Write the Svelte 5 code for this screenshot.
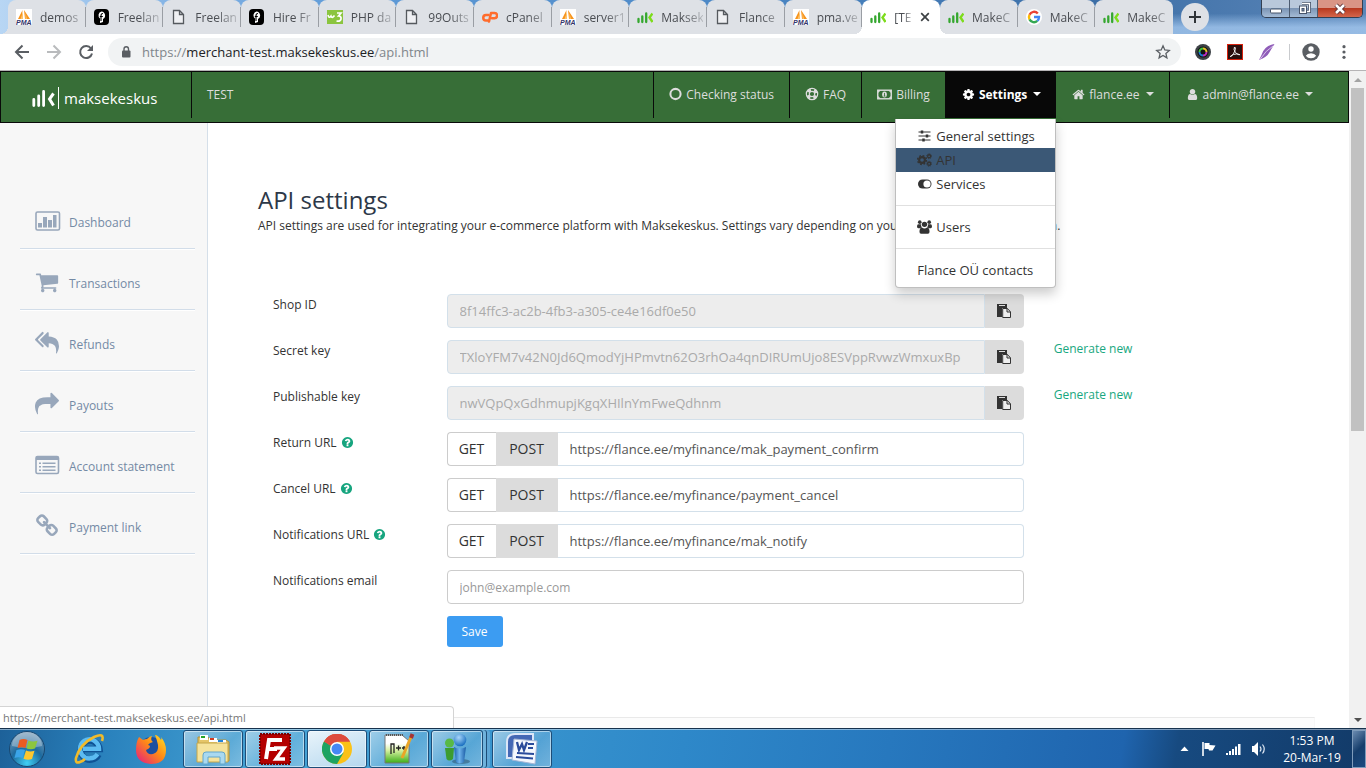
<script>
  const tabs = [
    { icon: 'pma', title: 'demos' },
    { icon: 'free', title: 'Freelan' },
    { icon: 'page', title: 'Freelan' },
    { icon: 'free', title: 'Hire Fr' },
    { icon: 'w3', title: 'PHP da' },
    { icon: 'page', title: '99Outs' },
    { icon: 'cp', title: 'cPanel' },
    { icon: 'pma', title: 'server1' },
    { icon: 'mk', title: 'Maksek' },
    { icon: 'page', title: 'Flance' },
    { icon: 'pma', title: 'pma.ve' },
    { icon: 'mk', title: '[TE', active: true },
    { icon: 'mk', title: 'MakeC' },
    { icon: 'google', title: 'MakeC' },
    { icon: 'mk', title: 'MakeC' }
  ];

  const side = [
    { icon: 'chart', label: 'Dashboard' },
    { icon: 'cart', label: 'Transactions' },
    { icon: 'replyall', label: 'Refunds' },
    { icon: 'share', label: 'Payouts' },
    { icon: 'list', label: 'Account statement' },
    { icon: 'link', label: 'Payment link' }
  ];

  const keys = [
    { id: 'shop', label: 'Shop ID', value: '8f14ffc3-ac2b-4fb3-a305-ce4e16df0e50' },
    { id: 'secret', label: 'Secret key', value: 'TXloYFM7v42N0Jd6QmodYjHPmvtn62O3rhOa4qnDIRUmUjo8ESVppRvwzWmxuxBp', gen: true },
    { id: 'pub', label: 'Publishable key', value: 'nwVQpQxGdhmupjKgqXHIlnYmFweQdhnm', gen: true }
  ];

  const urls = [
    { id: 'ret', label: 'Return URL', value: 'https://flance.ee/myfinance/mak_payment_confirm' },
    { id: 'can', label: 'Cancel URL', value: 'https://flance.ee/myfinance/payment_cancel' },
    { id: 'not', label: 'Notifications URL', value: 'https://flance.ee/myfinance/mak_notify' }
  ];

  const paths = {
    cart: 'M704 1536q0 52-38 90t-90 38-90-38-38-90 38-90 90-38 90 38 38 90zm896 0q0 52-38 90t-90 38-90-38-38-90 38-90 90-38 90 38 38 90zm128-1088v512q0 24-16.500 42.500t-40.500 21.500l-1044 122q13 60 13 70 0 16-24 64h920q26 0 45 19t19 45-19 45-45 19h-1024q-26 0-45-19t-19-45q0-11 8-31.500t16-36 21.500-40 15.500-29.500l-177-823h-204q-26 0-45-19t-19-45 19-45 45-19h256q16 0 28.500 6.500t19.500 15.500 13 24.500 8 26 5.500 29.500 4.500 26h1201q26 0 45 19t19 45z',
    replyall: 'M640 1082v70q0 42-39 59-13 5-25 5-27 0-45-19l-512-512q-19-19-19-45t19-45l512-512q29-31 70-14 39 17 39 59v69l-397 398q-19 19-19 45t19 45zm1152 58q0 58-17 133.500t-38.500 138-48 125-40.500 90.500l-20 40q-8 17-28 17-6 0-9-1-25-8-23-34 43-400-106-565-64-71-170.500-110.500t-267.500-52.500v251q0 42-39 59-13 5-25 5-27 0-45-19l-512-512q-19-19-19-45t19-45l512-512q29-31 70-14 39 17 39 59v262q411 28 599 221 169 173 169 509z',
    share: 'M1792 640q0 26-19 45l-512 512q-19 19-45 19t-45-19-19-45v-256h-224q-98 0-175.500 6t-154 21.500-133 42.500-105.500 69.500-80 101-48.500 138.500-17.500 181q0 55 5 123 0 6 2.500 23.500t2.500 26.500q0 15-8.500 25t-23.500 10q-16 0-28-17-7-9-13-22t-13.500-30-10.500-24q-127-285-127-451 0-199 53-333 162-403 875-403h224v-256q0-26 19-45t45-19 45 19l512 512q19 19 19 45z',
    link: 'M1520 1216q0-40-28-68l-208-208q-28-28-68-28-42 0-72 32 3 3 19 18.500t21.500 21.500 15 19 13 25.500 3.500 27.500q0 40-28 68t-68 28q-15 0-27.500-3.500t-25.500-13-19-15-21.500-21.500-18.500-19q-33 31-33 73 0 40 28 68l206 207q27 27 68 27 40 0 68-26l147-146q28-28 28-67zm-703-705q0-40-28-68l-206-207q-28-28-68-28-39 0-68 27l-147 146q-28 28-28 67 0 40 28 68l208 208q27 27 68 27 42 0 72-31-3-3-19-18.500t-21.500-21.500-15-19-13-25.500-3.500-27.500q0-40 28-68t68-28q15 0 27.500 3.500t25.500 13 19 15 21.500 21.500 18.500 19q33-31 33-73zm895 705q0 120-85 203l-147 146q-83 83-203 83-121 0-204-85l-206-207q-83-83-83-203 0-123 88-209l-88-88q-86 88-208 88-120 0-204-84l-208-208q-84-84-84-204t85-203l147-146q83-83 203-83 121 0 204 85l206 207q83 83 83 203 0 123-88 209l88 88q86-88 208-88 120 0 204 84l208 208q84 84 84 204z',
    cog: 'M1152 896q0-106-75-181t-181-75-181 75-75 181 75 181 181 75 181-75 75-181zm512-109v222q0 12-8 23t-20 13l-185 28q-19 54-39 91 35 50 107 138 10 12 10 25t-9 23q-27 37-99 108t-94 71q-12 0-26-9l-138-108q-44 23-91 38-16 136-29 186-7 28-36 28h-222q-14 0-24.500-8.500t-11.500-21.500l-28-184q-49-16-90-37l-141 107q-10 9-25 9-14 0-25-11-126-114-165-168-7-10-7-23 0-12 8-23 15-21 51-66.500t54-70.500q-27-50-41-99l-183-27q-13-2-21-12.500t-8-23.500v-222q0-12 8-23t19-13l186-28q14-46 39-92-40-57-107-138-10-12-10-24 0-10 9-23 26-36 98.500-107.500t94.500-71.500q13 0 26 10l138 107q44-23 91-38 16-136 29-186 7-28 36-28h222q14 0 24.500 8.500t11.500 21.500l28 184q49 16 90 37l142-107q9-9 24-9 13 0 25 10 129 119 165 170 7 8 7 22 0 12-8 23-15 21-51 66.500t-54 70.500q26 50 41 98l183 28q13 2 21 12.500t8 23.500z',
    home: 'M1472 992v480q0 26-19 45t-45 19h-384v-384h-256v384h-384q-26 0-45-19t-19-45v-480q0-1 .5-3t.5-3l575-474 575 474q1 2 1 6zm223-69l-62 74q-8 9-21 11h-3q-13 0-21-7l-692-577-692 577q-12 8-24 7-13-2-21-11l-62-74q-8-10-7-23.500t11-21.500l719-599q32-26 76-26t76 26l244 204v-195q0-14 9-23t23-9h192q14 0 23 9t9 23v408l219 182q10 8 11 21.500t-7 23.500z',
    user: 'M1536 1399q0 109-62.500 187t-150.500 78h-854q-88 0-150.500-78t-62.500-187q0-85 8.500-160.500t31.500-152 58.500-131 94-89 134.500-34.500q131 128 313 128t313-128q76 0 134.500 34.500t94 89 58.500 131 31.500 152 8.500 160.500zm-256-887q0 159-112.500 271.500t-271.500 112.500-271.500-112.500-112.500-271.500 112.500-271.500 271.500-112.500 271.500 112.500 112.500 271.500z',
    help: 'M1024 1376v-192q0-14-9-23t-23-9h-192q-14 0-23 9t-9 23v192q0 14 9 23t23 9h192q14 0 23-9t9-23zm256-672q0-88-55.500-163t-138.500-116-170-41q-243 0-371 213-15 24 8 42l132 100q7 6 19 6 16 0 25-12 53-68 86-92 34-24 86-24 48 0 85.500 26t37.500 59q0 38-20 61t-68 45q-63 28-115.500 86.500t-52.500 125.500v36q0 14 9 23t23 9h192q14 0 23-9t9-23q0-19 21.500-49.500t54.500-49.500q32-18 49-28.500t46-35 44.500-48 28-60.500 12.500-81zm384 192q0 209-103 385.500t-279.500 279.500-385.500 103-385.500-103-279.500-279.500-103-385.500 103-385.500 279.500-279.500 385.500-103 385.500 103 279.500 279.500 103 385.500z'
  };
</script>

{#snippet fa(name, size)}
  <svg class="ico" width={size} height={size} viewBox="0 0 1792 1792" fill="currentColor" aria-hidden="true"><path d={paths[name]} /></svg>
{/snippet}

{#snippet favicon(name)}
  <svg class="fav" width="16" height="16" viewBox="0 0 16 16" aria-hidden="true">
    {#if name === 'pma'}
      <rect width="16" height="16" fill="#fff" />
      <path d="M6.500 1L2 10h4zM8 1l1 9h5z" fill="#f7941d" />
      <path d="M7 3v7H4.500zM9.500 4l1.500 6H9.500z" fill="#fdc36b" />
      <text x="0" y="16" font-size="7" font-weight="700" font-style="italic" font-family="Liberation Sans, sans-serif" fill="#33336b">PMA</text>
    {:else if name === 'free'}
      <rect width="15" height="16" rx="4" fill="#000" />
      <path d="M7.500 2.500a4 4 0 0 1 1.500 7.500v3l-3 1V9.500A4 4 0 0 1 7.500 2.500z" fill="#fff" />
      <path d="M9 4.500q-2 0-2 2V12M5.800 7.500h3" stroke="#000" stroke-width="1.100" fill="none" />
    {:else if name === 'page'}
      <path d="M2.500 1.500h6l4 4v9h-10zM8.500 1.500v4h4" fill="#fff" fill-opacity=".5" stroke="#55595e" stroke-width="1.300" />
    {:else if name === 'w3'}
      <rect width="16" height="14" y="1" fill="#8bc53f" />
      <path d="M1 6q1 4 3 1q1 3 3.500-.5" fill="none" stroke="#fff" stroke-width="1.600" />
      <path d="M10 4h4l-2.500 3q3 .2 2.500 3t-4.500 2" fill="none" stroke="#fff" stroke-width="1.700" />
    {:else if name === 'cp'}
      <path d="M6.500 6H4a2.700 2.700 0 0 0 0 5.500h2" fill="none" stroke="#ff6c2c" stroke-width="2.500" stroke-linecap="round" />
      <path d="M7 12.500L9 4h3.500a2.600 2.600 0 0 1 0 5.200H10" fill="none" stroke="#ff6c2c" stroke-width="2.500" stroke-linecap="round" stroke-linejoin="round" />
    {:else if name === 'mk'}
      <path d="M1.500 10V13M5.300 7.500V13M9.200 4.500V13" stroke="#35a72f" stroke-width="2.300" stroke-linecap="round" />
      <path d="M15.500 4.500l-3 4 3 4.500" fill="none" stroke="#7ddc1b" stroke-width="2.400" />
    {:else}
      <circle cx="8" cy="8" r="8" fill="#fff" />
      <path d="M11.800 4.500A5 5 0 0 0 3.500 5.800" fill="none" stroke="#ea4335" stroke-width="2.400" />
      <path d="M3.500 5.800a5 5 0 0 0 0 4.600" fill="none" stroke="#fbbc05" stroke-width="2.400" />
      <path d="M3.500 10.400a5 5 0 0 0 7.800 1.500" fill="none" stroke="#34a853" stroke-width="2.400" />
      <path d="M8 8h5q0 2.500-1.700 3.900" fill="none" stroke="#4285f4" stroke-width="2.400" />
    {/if}
  </svg>
{/snippet}

{#snippet sideIcon(name)}
  {#if name === 'chart'}
    <svg class="ico" width="26" height="20" viewBox="0 0 26 20" fill="currentColor" aria-hidden="true">
      <rect x="1" y="1" width="23.500" height="18" rx="1.500" fill="none" stroke="currentColor" stroke-width="1.600" />
      <path d="M3 12h4v4.500H3zM8 6h4v10.500H8zM13 9h4v7.500h-4zM18 4h3.500v12.500H18z" />
    </svg>
  {:else if name === 'list'}
    <svg class="ico" width="26" height="20" viewBox="0 0 26 20" fill="currentColor" aria-hidden="true">
      <path d="M1 3a2 2 0 0 1 2-2h18.500a2 2 0 0 1 2 2v2H1z" />
      <rect x="1" y="1.500" width="22.500" height="17" rx="1.500" fill="none" stroke="currentColor" stroke-width="1.600" />
      <path d="M4 7.500h2V9H4zM7.500 7.500h13V9h-13zM4 11h2v1.500H4zM7.500 11h13v1.500h-13zM4 14.500h2V16H4zM7.500 14.500h13V16h-13z" />
    </svg>
  {:else}
    {@render fa(name, 24)}
  {/if}
{/snippet}

{#snippet caret()}<span class="caret"></span>{/snippet}

<div class="screen">
  <header class="strip">
    <div class="tabs">
      {#each tabs as t}
        <div class="tab" class:active={t.active}>
          {@render favicon(t.icon)}
          <span class="title">{t.title}</span>
          {#if t.active}
            <svg width="10" height="10" viewBox="0 0 10 10" aria-hidden="true"><path d="M1.200 1.200l7.600 7.600M8.800 1.200L1.200 8.800" stroke="#3c4043" stroke-width="1.700" /></svg>
          {/if}
        </div>
      {/each}
    </div>
    <button class="plus" aria-label="New tab"><svg width="14" height="14" viewBox="0 0 14 14"><path d="M7 1v12M1 7h12" stroke="#303438" stroke-width="2" /></svg></button>
    <div class="wincontrols">
      <button aria-label="Minimize"><svg width="14" height="14" viewBox="0 0 14 14"><rect x="1.500" y="7" width="11" height="4" rx="1" fill="#fff" stroke="#47546a" /></svg></button>
      <button aria-label="Restore"><svg width="14" height="14" viewBox="0 0 14 14"><path d="M5 1.500h7.500v8H10" fill="none" stroke="#47546a" stroke-width="3" /><path d="M5 1.500h7.500v8H10" fill="none" stroke="#fff" stroke-width="1.300" /><rect x="2.500" y="4" width="7" height="7.500" fill="#fff" stroke="#47546a" /><rect x="5" y="6.500" width="2" height="2.500" fill="#7d93b5" stroke="#47546a" /></svg></button>
      <button class="close" aria-label="Close"><svg width="14" height="14" viewBox="0 0 14 14"><path d="M3 3l8 8M11 3l-8 8" stroke="#5b3236" stroke-width="4.500" /><path d="M3 3l8 8M11 3l-8 8" stroke="#fff" stroke-width="2.500" /></svg></button>
    </div>
  </header>

  <div class="toolbar">
    <div class="navbtns">
      <button aria-label="Back"><svg width="16" height="16" viewBox="0 0 16 16" fill="none" stroke="#5a5e63" stroke-width="2"><path d="M15 8H2M8.500 1.500L2 8l6.500 6.500" /></svg></button>
      <button aria-label="Forward"><svg width="16" height="16" viewBox="0 0 16 16" fill="none" stroke="#b9bbbd" stroke-width="2"><path d="M1 8h13M7.500 1.500L14 8l-6.500 6.500" /></svg></button>
      <button aria-label="Reload"><svg width="16" height="16" viewBox="0 0 16 16" fill="none" stroke="#5a5e63" stroke-width="2"><path d="M13 4.500A6 6 0 1 0 14 9.500" /><path d="M15 1v6H9z" fill="#5a5e63" stroke="none" /></svg></button>
    </div>
    <div class="omnibox">
      <svg width="10" height="12" viewBox="0 0 10 12" aria-hidden="true"><rect x="1" y="4.500" width="8.500" height="7" rx="1" fill="#5a5e63" /><path d="M3 5V3a2.200 2.200 0 0 1 4.500 0v2" fill="none" stroke="#5a5e63" stroke-width="1.400" /></svg>
      <span class="url">https://<b>merchant-test.maksekeskus.ee</b>/api.html</span>
      <svg width="16" height="16" viewBox="0 0 16 16" aria-hidden="true"><path d="M8 1.800l1.800 4.200 4.500.4-3.400 3 1 4.400L8 11.500l-3.900 2.300 1-4.400-3.400-3 4.500-.4z" fill="none" stroke="#5a5e63" stroke-width="1.300" /></svg>
    </div>
    <div class="exts">
      <svg width="16" height="16" viewBox="0 0 16 16" aria-hidden="true"><circle cx="8" cy="8" r="8" fill="#3c4146" /><circle cx="8" cy="8" r="5.500" fill="#111" /><path d="M4.500 8A3.500 3.500 0 0 1 8 4.500" stroke="#3fc13f" stroke-width="2" fill="none" /><path d="M8 4.500A3.500 3.500 0 0 1 11.500 8" stroke="#e8c22b" stroke-width="2" fill="none" /><path d="M11.500 8A3.500 3.500 0 0 1 8 11.500" stroke="#c02cc0" stroke-width="2" fill="none" /><path d="M8 11.500A3.500 3.500 0 0 1 4.500 8" stroke="#1a7ad0" stroke-width="2" fill="none" /></svg>
      <svg width="16" height="16" viewBox="0 0 16 16" aria-hidden="true"><rect x=".5" y=".5" width="15" height="15" fill="#2a0f0e" stroke="#d8210d" /><path d="M7.500 3q1.500 0 .5 3.500T3.500 13q-1-1 3-2.500t6.500.2q-2 .8-4.500-2.200T7.500 3z" fill="none" stroke="#eee" stroke-width="1" /></svg>
      <svg width="16" height="16" viewBox="0 0 16 16" aria-hidden="true"><path d="M15.500 0Q5 2 2.500 11L0 16q8-3 10-7z" fill="#8f5cb8" /><path d="M14 2Q7 6 1 15.500" stroke="#d9c3ea" stroke-width="1" fill="none" /></svg>
      <span class="vr"></span>
      <svg width="18" height="18" viewBox="0 0 18 18" aria-hidden="true"><circle cx="9" cy="9" r="8.700" fill="#5a5e63" /><circle cx="9" cy="6" r="2.700" fill="#fff" /><path d="M3.800 12.700q1.500-2.500 5.200-2.500t5.200 2.500Q12.300 15.200 9 15.200t-5.200-2.500z" fill="#fff" /></svg>
      <svg width="16" height="16" viewBox="0 0 16 16" fill="#5a5e63" aria-hidden="true"><circle cx="8" cy="2.700" r="1.600" /><circle cx="8" cy="8" r="1.600" /><circle cx="8" cy="13.300" r="1.600" /></svg>
    </div>
  </div>

  <div class="viewport">
    <div class="page">
      <nav class="navbar">
        <a class="brand" href="#home" aria-label="maksekeskus">
          <svg width="28" height="24" viewBox="0 0 28 24" aria-hidden="true"><path d="M1.800 13.500v6M6.700 10v9.500M11.600 5.500v14" stroke="#fff" stroke-width="2.800" stroke-linecap="round" /><path d="M21.500 7.500l-4 5.500 4 6.500" fill="none" stroke="#fff" stroke-width="3" /><path d="M26.500 1v22" stroke="#fff" /></svg>
          <span>maksekeskus</span>
        </a>
        <span class="env">TEST</span>
        <div class="links">
          <a href="#status"><svg class="ico" width="13" height="14" viewBox="0 0 14 14" aria-hidden="true"><circle cx="7" cy="7" r="5.500" fill="none" stroke="currentColor" stroke-width="2.200" /></svg>Checking status</a>
          <a href="#faq"><svg class="ico" width="14" height="14" viewBox="0 0 14 14" fill="none" stroke="currentColor" aria-hidden="true"><circle cx="7" cy="7" r="5.700" stroke-width="1.200" /><circle cx="7" cy="7" r="2.700" stroke-width="1.200" /><circle cx="7" cy="7" r="4.200" stroke-width="2.800" stroke-dasharray="3.300 3.297" stroke-dashoffset="4.950" /></svg>FAQ</a>
          <a href="#billing"><svg class="ico" width="15" height="11" viewBox="0 0 14 10" aria-hidden="true"><rect x=".7" y="1" width="12.600" height="8" fill="none" stroke="currentColor" stroke-width="1.300" /><ellipse cx="7" cy="5" rx="2.200" ry="2.800" fill="currentColor" /><path d="M7 3.500v3M6.200 6.500h1.700" stroke="#376e37" stroke-width=".8" /><path d="M1 1h2.500L1 3.500zM13 1v2.500L10.500 1zM1 9V6.500L3.500 9zM13 9h-2.500L13 6.500z" fill="currentColor" /></svg>Billing</a>
          <div class="drop">
            <a class="wide current" href="#settings">{@render fa('cog', 13)}Settings{@render caret()}</a>
            <div class="menu">
              <a href="#general"><svg class="ico" width="15" height="12" viewBox="0 0 14 12" fill="none" stroke="currentColor" aria-hidden="true"><path d="M1 2h12M1 6h12M1 10h12" /><path d="M4.500 .5v3M9.500 4.500v3M6 8.500v3" stroke-width="2.500" /></svg>General settings</a>
              <a class="on" href="#api"><svg class="ico" width="15" height="14" viewBox="0 0 14 13" fill="none" stroke="currentColor" aria-hidden="true"><circle cx="4.700" cy="6.500" r="2.700" stroke-width="2" /><circle cx="4.700" cy="6.500" r="4.200" stroke-width="1.200" stroke-dasharray="1.700 1.600" /><circle cx="11.300" cy="3" r="1.400" stroke-width="1.200" /><circle cx="11.300" cy="3" r="2.300" stroke-width=".8" stroke-dasharray="1 .8" /><circle cx="11.300" cy="10" r="1.400" stroke-width="1.200" /><circle cx="11.300" cy="10" r="2.300" stroke-width=".8" stroke-dasharray="1 .8" /></svg>API</a>
              <a href="#services"><svg class="ico" width="15" height="10" viewBox="0 0 14 10" aria-hidden="true"><path d="M5 .5h4.500a4.500 4.500 0 0 1 0 9H5a4.500 4.500 0 0 1 0-9z" fill="currentColor" /><circle cx="9.500" cy="5" r="3.600" fill="#fff" /></svg>Services</a>
              <hr />
              <a href="#users"><svg class="ico" width="15" height="14" viewBox="0 0 14 13" fill="currentColor" aria-hidden="true"><circle cx="2.600" cy="2" r="1.700" /><circle cx="11.400" cy="2" r="1.700" /><circle cx="7" cy="4" r="2.500" /><path d="M0 6q0-2 1.300-2h2.400q0 1.800.8 2.700-1.200.3-1.700 1H1.200Q0 7.700 0 6zM14 6q0-2-1.300-2h-2.400q0 1.800-.8 2.700 1.200.3 1.700 1h1.600Q14 7.700 14 6zM2.300 11q0-3.800 2.300-4 2.400 1.600 4.800 0 2.300.2 2.300 4 0 1.800-1.500 1.800H3.800q-1.500 0-1.500-1.800z" /></svg>Users</a>
              <hr />
              <a href="#contacts">Flance OÜ contacts</a>
            </div>
          </div>
          <a class="wide" href="#shop">{@render fa('home', 13)}flance.ee{@render caret()}</a>
          <a class="wide" href="#account">{@render fa('user', 13)}admin@flance.ee{@render caret()}</a>
        </div>
      </nav>

      <div class="body">
        <aside>
          {#each side as s}
            <a href="#{s.icon}"><span class="si">{@render sideIcon(s.icon)}</span><span>{s.label}</span></a>
          {/each}
        </aside>
        <main>
          <h1>API settings</h1>
          <p>API settings are used for integrating your e-commerce platform with Maksekeskus. Settings vary depending on your webshop's implementation.</p>
          <form onsubmit={(e) => e.preventDefault()}>
            {#each keys as k}
              <div class="row">
                <label for={k.id}>{k.label}</label>
                <div class="group">
                  <input id={k.id} type="text" value={k.value} disabled />
                  <button type="button" class="copy" aria-label="Copy {k.label}">
                    <svg width="14" height="14" viewBox="0 0 14 14" aria-hidden="true"><path d="M0 0h10v4H5v9H0z" fill="#333" /><path d="M2 1.500h6" stroke="#dcdcdc" /><path d="M5.700 4.500h4.600l3.200 3.200v5.800H5.700zM10 4.500V8h3.500" fill="#eee" stroke="#333" /></svg>
                  </button>
                </div>
                {#if k.gen}<a class="gen" href="#new-{k.id}">Generate new</a>{/if}
              </div>
            {/each}
            {#each urls as u}
              <div class="row">
                <label for={u.id}>{u.label} <span class="q">{@render fa('help', 13)}</span></label>
                <div class="group">
                  <button type="button" class="get">GET</button>
                  <button type="button" class="post">POST</button>
                  <input class="plain" id={u.id} type="text" value={u.value} />
                </div>
              </div>
            {/each}
            <div class="row">
              <label for="email">Notifications email</label>
              <div class="group"><input class="email" id="email" type="email" placeholder="john@example.com" /></div>
            </div>
            <div class="row last">
              <span></span>
              <div class="group"><button class="save">Save</button></div>
            </div>
          </form>
          <section class="next"></section>
        </main>
      </div>
    </div>
    <div class="scroll">
      <span class="up"></span>
      <div class="track"><div class="thumb"></div></div>
      <span class="down"></span>
    </div>
    <div class="status">https://merchant-test.maksekeskus.ee/api.html</div>
  </div>

  <footer class="taskbar">
    <button class="launch" aria-label="Start">
      <svg width="38" height="38" viewBox="0 0 38 38"><defs><radialGradient id="orb" cx=".5" cy=".9" r=".9"><stop offset="0" stop-color="#3fd0f5" /><stop offset=".5" stop-color="#1d6a9e" /><stop offset="1" stop-color="#7f9fba" /></radialGradient></defs><circle cx="19" cy="19" r="17.500" fill="url(#orb)" stroke="#184770" /><path d="M4 16a15 14 0 0 1 30 0q-15 4-30 0z" fill="#fff" opacity=".3" /><path d="M11.500 10q4-2 8 0l-2 8q-3.500-1.500-8 0z" fill="#ea5b22" /><path d="M20.500 10.500q4 2 9 .3l-2.500 7.700q-4 1.500-8.500 0z" fill="#8cc63f" /><path d="M8.500 20q4.500-1.500 8.500 0l-2.500 8q-4-1.500-8 0z" fill="#3ba4e8" /><path d="M18 20.500q4 2 8.500 .3L24 29q-4 1.500-8.500-.2z" fill="#fdc72f" /></svg>
    </button>
    <button class="launch" aria-label="Internet Explorer">
      <svg width="32" height="32" viewBox="0 0 32 32"><path d="M25.500 21.500A9.500 9.500 0 1 1 26.500 16H10" fill="none" stroke="#0f5396" stroke-width="6.500" /><path d="M24.500 21A9.500 9.500 0 1 1 26 15.800H10" fill="none" stroke="#5cbcf2" stroke-width="4.500" /><path d="M29 8Q32-1 21 4 7 11 3 25q-1 6 4 4 3-1 5-3" fill="none" stroke="#f0bb2b" stroke-width="2.600" /></svg>
    </button>
    <button class="launch" aria-label="Firefox">
      <svg width="32" height="32" viewBox="0 0 32 32"><defs><linearGradient id="ff" x1="1" y1="0" x2="0" y2="1"><stop offset="0" stop-color="#ffe226" /><stop offset=".45" stop-color="#ff8a16" /><stop offset="1" stop-color="#e31587" /></linearGradient></defs><circle cx="16" cy="15" r="11" fill="#1c4fa0" /><path d="M4 4l4 3q2-1 4-1 3-3 5-3-2 4 1 6-4 1-5 3 2 0 2 2-1 2-4 3 1 5 7 4 6-2 5-9-1-5-3-10 3 0 6 5 1-1 0-3 5 6 5 13 0 14-15 14Q1 30 1 17 1 9 4 4z" fill="url(#ff)" /></svg>
    </button>
    <button class="task" aria-label="Explorer">
      <svg width="36" height="32" viewBox="0 0 36 32"><path d="M3 4h10l2 3h16l3 2v19H3z" fill="#e5c568" stroke="#b49237" /><path d="M5 2h8v5H5z" fill="#fff" /><path d="M6 3h4v2H6z" fill="#28a428" /><path d="M14 5h8v4h-8z" fill="#fff" /><path d="M15 5h4v2h-4z" fill="#d23c22" /><path d="M22 7h9v4h-9z" fill="#fff" /><path d="M23 7h5v2h-5z" fill="#2484d8" /><path d="M2 10h31v19H2z" fill="#f5e39c" stroke="#c4a64a" /><path d="M8 31V22q0-3 3-3h16q3 0 3 3v9h-5v-7H13v7z" fill="#a9d9f0" stroke="#62a6cc" /></svg>
    </button>
    <button class="task" aria-label="FileZilla">
      <svg width="32" height="32" viewBox="0 0 32 32"><rect x="1" y="1" width="30" height="30" fill="#b40000" stroke="#7d0000" stroke-width="2" stroke-dasharray="2 1" /><path d="M7 26L10 7h13M8 16h10" fill="none" stroke="#fff" stroke-width="4" /><path d="M15 15h10l-8 11h9" fill="none" stroke="#fff" stroke-width="3.500" /></svg>
    </button>
    <button class="task lit" aria-label="Chrome">
      <svg width="30" height="30" viewBox="0 0 30 30"><circle cx="15" cy="15" r="15" fill="#fbc116" /><path d="M15 15L2 7.500A15 15 0 0 1 28 7.500H15z" fill="#dd4b3e" /><path d="M2 7.500A15 15 0 0 0 15 30l6.500-11.200L15 15z" fill="#1da362" /><path d="M2 7.500A15 15 0 0 1 28 7.500H15q-5 0-6.500 4.200z" fill="#dd4b3e" /><circle cx="15" cy="15" r="7" fill="#fff" /><circle cx="15" cy="15" r="5.500" fill="#4688f4" /></svg>
    </button>
    <button class="task" aria-label="Notepad++">
      <svg width="32" height="32" viewBox="0 0 32 32"><defs><linearGradient id="np" x1="0" y1="0" x2="0" y2="1"><stop offset=".3" stop-color="#fff" /><stop offset=".55" stop-color="#d6f0a0" /><stop offset="1" stop-color="#3cae18" /></linearGradient></defs><path d="M2 2h17l7 6v22H2z" fill="url(#np)" stroke="#777" /><path d="M3 2h17" stroke="#555" stroke-width="2" stroke-dasharray="1 1" /><path d="M8 21v-10h3v9M13 15h5M15.500 12.500v5M19 15h4M21 13v4" stroke="#222" stroke-width="1.300" fill="none" /><path d="M28 4L19 25" stroke="#eaa526" stroke-width="3" /><path d="M29.500 1L28 5" stroke="#a63333" stroke-width="4" /></svg>
    </button>
    <button class="task stack" aria-label="Messenger">
      <svg width="28" height="32" viewBox="0 0 28 32"><defs><radialGradient id="mb" cx=".4" cy=".3" r=".7"><stop offset="0" stop-color="#a8d6fa" /><stop offset="1" stop-color="#1a6fc0" /></radialGradient><linearGradient id="mbody"><stop offset="0" stop-color="#1c64ae" /><stop offset=".45" stop-color="#6fb4ec" /><stop offset="1" stop-color="#1a5ca6" /></linearGradient></defs><ellipse cx="18" cy="28.500" rx="9" ry="2.500" fill="#123" opacity=".35" /><circle cx="6.500" cy="10" r="4.500" fill="#58b947" /><path d="M2 15h9l-1 11q-4 3-6.500 0z" fill="#3c9c30" /><circle cx="17" cy="7" r="6.300" fill="url(#mb)" /><path d="M11 14q6 3 12 0l-2 15q-4 3-8 0z" fill="url(#mbody)" /></svg>
    </button>
    <button class="task word" aria-label="Word">
      <svg width="32" height="32" viewBox="0 0 32 32"><path d="M1 9q0-8 8-8h18v24H1z" fill="#4468b5" stroke="#dbe6f7" stroke-width="2" /><path d="M8 6l23 2-2 23-23-4z" fill="#f4f7fd" stroke="#a5b6d6" /><path d="M11 9l2 8 3-6 2 6 3-8" fill="none" stroke="#2a4b9b" stroke-width="2.300" /><path d="M22 11h6M22 15h5M11 20l17 1M10 24l17 1.500" stroke="#2a4b9b" stroke-width="2" /></svg>
    </button>
    <div class="tray">
      <svg width="9" height="5" viewBox="0 0 9 5" aria-hidden="true"><path d="M4.500 .5L8.500 5h-8z" fill="#fff" /></svg>
      <svg width="16" height="16" viewBox="0 0 16 16" aria-hidden="true"><path d="M2 1v14" stroke="#fff" stroke-width="1.600" /><path d="M3.500 2h5v2l6 .5-3 5H8l-.5-1.500h-4z" fill="#fff" /></svg>
      <svg width="16" height="14" viewBox="0 0 16 14" fill="#fff" aria-hidden="true"><path d="M0 11h2v2H0zM3 9h2v4H3zM6 7h2v6H6zM9 4.500h2V13H9zM12 2h2.500v11H12z" /></svg>
      <svg width="16" height="16" viewBox="0 0 16 16" aria-hidden="true"><path d="M1 5h2l4-4v14l-4-4H1z" fill="#fff" /><path d="M9 5.500q2 2.500 0 5M11.500 3.500q3.500 4.500 0 9" fill="none" stroke="#dfe8f3" stroke-width="1.200" /></svg>
    </div>
    <div class="clock"><span>1:53 PM</span><span>20-Mar-19</span></div>
    <button class="desk" aria-label="Show desktop"></button>
  </footer>
</div>

<style>
  :global(body) { margin: 0; overflow: hidden; }
  .screen { height: 100vh; display: flex; flex-direction: column; font-family: 'Open Sans', sans-serif; font-size: 12px; color: #333; background: #fff; }
  .screen * { box-sizing: border-box; }
  button { font: inherit; border: 0; padding: 0; background: none; }
  a { color: inherit; text-decoration: none; }
  svg { display: block; flex: none; }
  .ico { display: inline-block; }

  .strip { flex: none; height: 34px; display: flex; align-items: flex-start; background: linear-gradient(180deg, transparent 40%, rgba(170, 205, 243, .75) 80%) right / 193px 100% no-repeat, linear-gradient(90deg, #b8d6f4 0, #86b5e6 12%, #5f9bd8 25%, #4a86c4 55%, #3c6ea6 80%, #5b86b8 100%); }
  .tabs { flex: 1; display: grid; grid-auto-flow: column; grid-auto-columns: minmax(0, 1fr); height: 34px; padding-left: 8px; min-width: 0; }
  .tab { min-width: 0; display: flex; align-items: center; gap: 8px; padding: 0 4px 0 8px; background: #dee1e6; border-radius: 8px 8px 0 0; position: relative; color: #4a4d52; font-size: 12px; }
  .tab:not(.active)::after { content: ''; position: absolute; right: 0; top: 7px; height: 20px; width: 1px; background: #9a9ea4; }
  .tab:last-child::after { display: none; }
  .tab:first-child::before { content: ''; position: absolute; left: -8px; bottom: 0; width: 8px; height: 8px; background: radial-gradient(circle at 0 0, transparent 8px, #dee1e6 8px); }
  .tab.active { background: #fff; z-index: 1; padding-right: 10px; }
  .tab.active::before { content: ''; position: absolute; left: -8px; bottom: 0; width: 8px; height: 8px; background: radial-gradient(circle at 0 0, transparent 8px, #fff 8px); }
  .tab.active::after { content: ''; position: absolute; right: -8px; bottom: 0; width: 8px; height: 8px; background: radial-gradient(circle at 100% 0, transparent 8px, #fff 8px); }
  .title { flex: 1; min-width: 0; white-space: nowrap; mask-image: linear-gradient(90deg, #000 50%, rgba(0, 0, 0, .25)); }
  .plus { width: 28px; height: 28px; margin: 3px 52px 0 8px; border-radius: 50%; background: #dee1e6; display: grid; place-items: center; }
  .wincontrols { display: flex; width: 102px; height: 18px; margin-right: 3px; border: 1px solid #333f52; border-top: 0; border-radius: 0 0 5px 5px; overflow: hidden; }
  .wincontrols button { width: 28px; display: grid; place-items: center; background: linear-gradient(#b9c8db 45%, #7c95b5 50%, #a4bbd5); border-right: 1px solid #4c5b70; }
  .wincontrols .close { flex: 1; border: 0; background: linear-gradient(#d99585 45%, #b83a20 50%, #d4664b); }

  .toolbar { flex: none; height: 37px; display: flex; align-items: center; background: #fff; border-bottom: 1px solid #b6b4b6; }
  .navbtns { display: flex; gap: 16px; padding: 0 14px; }
  .omnibox { flex: 1; height: 28px; border-radius: 14px; background: #f1f3f4; display: flex; align-items: center; gap: 6px; padding: 0 10px 0 13px; }
  .url { flex: 1; padding-left: 5px; font-size: 13px; color: #80868b; }
  .url b { font-weight: 400; color: #202124; }
  .exts { display: flex; align-items: center; gap: 16px; padding: 0 14px; }
  .vr { width: 1px; height: 16px; margin: 0 -4px 0 -2px; background: #c9cbce; }

  .viewport { flex: 1; min-height: 0; display: flex; position: relative; overflow: hidden; }
  .page { flex: 1; min-width: 0; display: flex; flex-direction: column; }
  .navbar { flex: none; height: 52px; display: flex; background: #376e37; border: 1px solid #090909; color: #ddd; font-size: 12px; }
  .brand { width: 191px; height: 46px; border-right: 1px solid #090909; display: flex; align-items: center; gap: 4px; padding: 6px 0 0 31px; color: #fff; font-size: 15px; }
  .env { padding: 14px 15px 0; line-height: 18px; }
  .links { margin-left: auto; margin-right: 20px; display: flex; height: 46px; }
  .links > a, .wide { display: flex; align-items: center; gap: 4px; height: 46px; padding: 0 15px 2px; border-left: 1px solid #090909; white-space: nowrap; }
  .links > a.wide, .wide { padding: 0 15px 2px 16px; }
  .current { background: #080808; color: #fff; font-weight: 700; }
  .drop + a.wide { border-left: 0; }
  .caret { border: 4px solid transparent; border-top-color: currentColor; border-bottom: 0; margin-left: 2px; }
  .drop { position: relative; }
  .menu { position: absolute; z-index: 5; right: 0; top: 47px; width: 161px; padding: 5px 0; background: #fff; border: 1px solid rgba(0, 0, 0, .25); border-top: 0; border-radius: 0 0 4px 4px; box-shadow: 0 6px 12px rgba(0, 0, 0, .2); color: #333; }
  .menu a { display: flex; align-items: center; gap: 4px; height: 24px; padding: 0 21px; font-size: 13px; white-space: nowrap; }
  .menu .on { background: #3b5876; }
  .menu hr { margin: 9px 0; border: 0; height: 1px; background: #e0e0e0; }

  .body { flex: 1; min-height: 0; display: flex; }
  aside { flex: none; width: 208px; padding: 65px 12px 0 20px; background: #f7f7f7; border-right: 1px solid #d5dfe9; color: #748aa5; }
  aside a { display: flex; align-items: center; gap: 8px; height: 61px; padding: 8px 0 0 15px; border-bottom: 1px solid #d2dde9; box-shadow: 0 1px 0 #fff; }
  .si { width: 26px; color: #98a7bb; padding-bottom: 3px; line-height: 0; }
  main { flex: 1; min-width: 0; padding: 62px 34px 0 50px; overflow: hidden; }
  h1 { margin: 0; font-size: 24px; line-height: 30px; font-weight: 400; color: #2d3848; }
  p { margin: 3px 0 0; line-height: 16px; white-space: nowrap; }
  form { padding: 60px 16px 0 0; }
  .row { display: grid; grid-template-columns: 2fr 7fr 3fr; align-items: start; margin-bottom: 12px; }
  .row > * { margin: 0 15px; min-width: 0; }
  label { height: 20px; display: flex; align-items: center; gap: 4px; font-weight: 500; white-space: nowrap; }
  .q { color: #17a57f; line-height: 0; }
  .gen { color: #18a780; line-height: 18px; }
  .group { display: flex; height: 34px; }
  .group input { flex: 1; min-width: 0; height: 34px; padding: 0 12px; border: 1px solid #d3e0ea; border-radius: 4px 0 0 4px; background: #ededed; color: #aaa; font: 13px 'Open Sans', sans-serif; }
  .group input.plain { background: #fff; color: #555; border-left: 0; border-radius: 0 4px 4px 0; }
  .group input.email { background: #fff; border-color: #ccc; border-radius: 4px; font-size: 12px; }
  .email::placeholder { color: #999; }
  .copy { width: 39px; background: #dcdcdc; border-radius: 0 4px 4px 0; display: grid; place-items: center; }
  .get, .post { font-size: 14px; color: #333; border: 1px solid #ccc; padding-bottom: 1px; }
  .get { width: 49px; border-right: 0; border-radius: 4px 0 0 4px; background: #fff; }
  .post { width: 62px; background: #dcdcdc; border-color: #dcdcdc; }
  .save { width: 56px; height: 31px; border-radius: 3px; background: #3c9cf2; color: #fff; }
  .last { margin: 0; }
  .next { margin-top: 67px; height: 40px; border: 1px solid #f7f7f7; border-top-color: #e9e9e9; background: #fcfcfc; }

  .scroll { flex: none; width: 17px; display: flex; flex-direction: column; align-items: center; background: #f1f1f1; }
  .track { flex: 1; width: 13px; }
  .thumb { height: 55%; background: #c1c1c1; }
  .up, .down { height: 17px; display: flex; align-items: center; }
  .up::before { content: ''; border: 4px solid transparent; border-bottom-color: #a3a3a3; border-top: 0; }
  .down::before { content: ''; border: 4px solid transparent; border-top-color: #505050; border-bottom: 0; }
  .status { position: absolute; left: 0; bottom: 0; width: 454px; height: 22px; padding-left: 3px; font-size: 11px; line-height: 22px; color: #777; background: #fff; border: 1px solid #d4d4d4; border-left: 0; border-bottom: 0; border-radius: 0 4px 0 0; }

  .taskbar { flex: none; height: 40px; display: flex; align-items: center; border-top: 1px solid #17324d; box-shadow: inset 0 1px 0 rgba(255, 255, 255, .45); background: linear-gradient(100deg, #1d6199 0, #2a82bd 8%, #47a4d6 20%, #3a97cf 34%, #2e88c9 50%, #2778be 65%, #1f64ae 82%, #174a80 86%, #123a68 100%); }
  .launch { width: 61px; height: 39px; display: grid; place-items: center; }
  .launch:first-child { width: 54px; }
  .launch:nth-child(2) { width: 69px; }
  .launch:nth-child(3) { width: 55px; margin-right: 5px; }
  .task { flex: none; width: 60px; height: 38px; margin-right: 2px; border: 1px solid #1d4d78; border-radius: 3px; box-shadow: inset 0 0 0 1px rgba(255, 255, 255, .5); background: linear-gradient(135deg, rgba(255, 255, 255, .5), rgba(255, 255, 255, .15) 60%, rgba(255, 255, 255, .3)); display: grid; place-items: center; }
  .lit { background: linear-gradient(160deg, #e9f4fb, #b4d7ee); }
  .stack { width: 52px; box-shadow: inset 0 0 0 1px rgba(255, 255, 255, .5), 3px 0 0 #6fb2dc, 4px 0 0 #1d4d78, 7px 0 0 #5ea6d6; margin-right: 9px; }
  .tray { margin-left: auto; display: flex; align-items: center; gap: 9px; color: #fff; }
  .tray svg:first-child { margin-right: 3px; }
  .clock { width: 78px; margin: 0 1px 0 6px; color: #fff; text-align: center; line-height: 17px; display: flex; flex-direction: column; }
  .desk { width: 14px; height: 38px; border: 1px solid #7f9cbb; background: linear-gradient(135deg, #6b8bb0, #163e6c 50%, #1a4a80); }
</style>
